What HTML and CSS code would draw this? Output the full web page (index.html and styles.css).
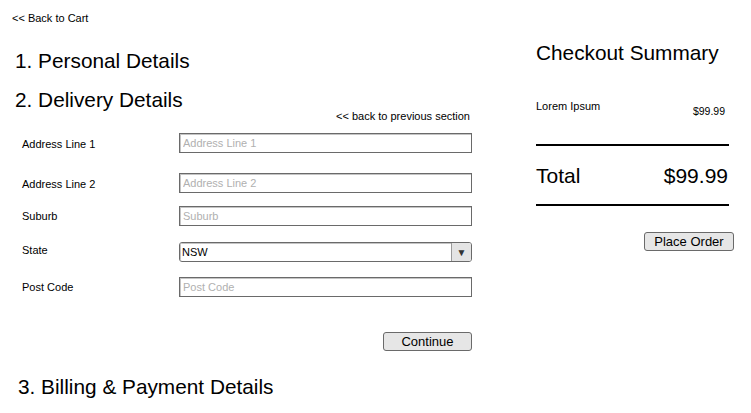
FILE: index.html
```html
<!DOCTYPE html>
<html>
<head>
<meta charset="utf-8">
<title>Checkout</title>
<link rel="stylesheet" href="styles.css">
</head>
<body>
<div class="page">
  <div class="main">
    <a class="back-cart" href="#">&lt;&lt; Back to Cart</a>
    <h2 class="section-title first">1. Personal Details</h2>
    <h2 class="section-title second">2. Delivery Details</h2>
    <div class="prev-row"><a class="prev-link" href="#">&lt;&lt; back to previous section</a></div>
    <form class="form">
      <div class="row r1">
        <label class="label">Address Line 1</label>
        <input class="field" type="text" placeholder="Address Line 1">
      </div>
      <div class="row r2">
        <label class="label">Address Line 2</label>
        <input class="field" type="text" placeholder="Address Line 2">
      </div>
      <div class="row r3">
        <label class="label">Suburb</label>
        <input class="field" type="text" placeholder="Suburb">
      </div>
      <div class="row r4">
        <label class="label">State</label>
        <div class="select">
          <span class="select-value">NSW</span>
          <span class="select-arrow">&#9660;</span>
        </div>
      </div>
      <div class="row r5">
        <label class="label">Post Code</label>
        <input class="field" type="text" placeholder="Post Code">
      </div>
      <div class="actions">
        <button class="btn btn-continue" type="button">Continue</button>
      </div>
    </form>
    <h2 class="section-title third">3. Billing &amp; Payment Details</h2>
  </div>
  <div class="summary">
    <h2 class="summary-title">Checkout Summary</h2>
    <div class="item">
      <span class="item-name">Lorem Ipsum</span>
      <span class="item-price">$99.99</span>
    </div>
    <div class="rule rule-1"></div>
    <div class="total">
      <span>Total</span>
      <span>$99.99</span>
    </div>
    <div class="rule rule-2"></div>
    <div class="order-row">
      <button class="btn btn-order" type="button">Place Order</button>
    </div>
  </div>
</div>
</body>
</html>
```

FILE: styles.css
```css
html, body {
  margin: 0;
  padding: 0;
  background: #fff;
}
body {
  font-family: "Liberation Sans", Arial, sans-serif;
  color: #000;
}
a {
  color: #000;
  text-decoration: none;
}
.page {
  display: flex;
  align-items: flex-start;
}
.main {
  width: 460px;
  padding: 0 64px 0 12px;
  display: flex;
  flex-direction: column;
}
.back-cart {
  display: block;
  margin-top: 12px;
  font-size: 11px;
  line-height: 13px;
}
.section-title {
  margin: 0;
  font-weight: normal;
  font-size: 20.8px;
  line-height: 24px;
}
.section-title.first {
  margin-top: 24px;
  margin-left: 3px;
}
.section-title.second {
  margin-top: 15px;
  margin-left: 3px;
}
.section-title.third {
  margin-top: 24px;
  margin-left: 6px;
}
.prev-row {
  display: flex;
  justify-content: flex-end;
  padding-right: 2px;
  margin-top: -2px;
}
.prev-link {
  font-size: 11px;
  line-height: 12px;
}
.form {
  display: flex;
  flex-direction: column;
  margin: 0;
}
.row {
  display: grid;
  grid-template-columns: 167px 293px;
  align-items: center;
  height: 20px;
}
.r1 { margin-top: 11px; }
.r2 { margin-top: 20px; }
.r3 { margin-top: 13px; }
.r4 { margin-top: 16px; }
.r5 { margin-top: 15px; }
.label {
  padding-left: 10px;
  font-size: 11px;
  line-height: 13px;
}
.r1 .label, .r2 .label { position: relative; top: 1px; }
.r4 .label { position: relative; top: -2px; }
.field {
  box-sizing: border-box;
  width: 293px;
  height: 20px;
  margin: 0;
  padding: 0 3px;
  border: 1px solid #6a6a6a;
  box-shadow: inset 1px 1px 0 #c4c4c4;
  font-family: "Liberation Sans", Arial, sans-serif;
  font-size: 11px;
  color: #000;
  outline: none;
}
.field::placeholder {
  color: #b0b0b0;
}
.select {
  box-sizing: border-box;
  width: 293px;
  height: 20px;
  display: flex;
  align-items: stretch;
  border: 1px solid #6a6a6a;
  border-radius: 3px;
  overflow: hidden;
}
.select-value {
  flex: 1;
  display: flex;
  align-items: center;
  padding-left: 2px;
  font-size: 11px;
  box-shadow: inset 1px 1px 0 #c4c4c4;
}
.select-arrow {
  width: 19px;
  display: flex;
  align-items: center;
  justify-content: center;
  background: #e4e4e4;
  border-left: 1px solid #9a9a9a;
  font-size: 10px;
  color: #333;
}
.actions {
  display: flex;
  justify-content: flex-end;
  margin-top: 35px;
}
.btn {
  box-sizing: border-box;
  height: 19px;
  margin: 0;
  padding: 0;
  border: 1px solid #6a6a6a;
  border-radius: 3px;
  background: #e6e6e6;
  font-family: "Liberation Sans", Arial, sans-serif;
  font-size: 13px;
  line-height: 17px;
  color: #000;
}
.btn-continue {
  width: 89px;
}
.btn-order {
  width: 90px;
}
.summary {
  width: 198px;
  display: flex;
  flex-direction: column;
}
.summary-title {
  margin: 41px 0 0;
  font-weight: normal;
  font-size: 20.8px;
  line-height: 24px;
}
.item {
  display: flex;
  justify-content: space-between;
  align-items: flex-start;
  margin-top: 35px;
  padding-right: 9px;
  font-size: 11px;
  line-height: 13px;
}
.item-price {
  margin-top: 5px;
  font-size: 10.5px;
}
.rule {
  height: 2px;
  background: #000;
  margin-right: 5px;
}
.rule-1 { margin-top: 26px; }
.rule-2 { margin-top: 16px; }
.total {
  display: flex;
  justify-content: space-between;
  margin-top: 18px;
  padding-right: 6px;
  font-size: 21px;
  line-height: 24px;
}
.order-row {
  display: flex;
  justify-content: flex-end;
  margin-top: 26px;
}
```
